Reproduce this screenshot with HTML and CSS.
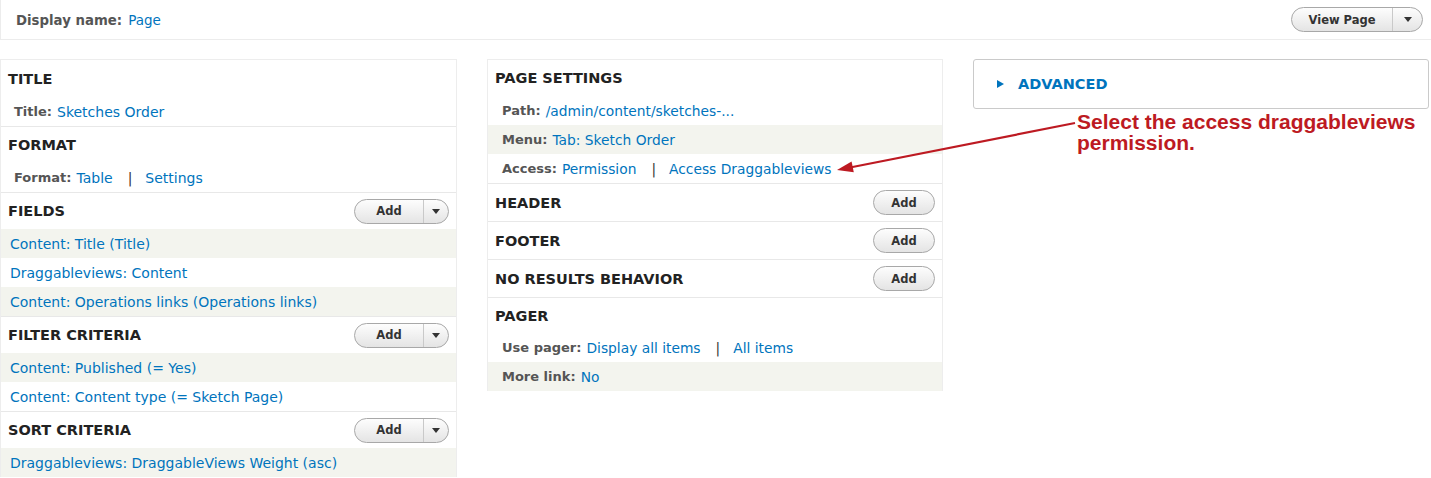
FILE: index.html
```html
<!DOCTYPE html>
<html lang="en">
<head>
    <meta charset="UTF-8">
    <meta name="viewport" content="width=device-width, initial-scale=1.0">
    <title>Views - Page display</title>
    <link rel="stylesheet" href="styles.css">
</head>
<body>

<div class="views-page">
    <div class="display-top">
        <div class="display-name"><span class="label">Display name:</span> <a href="#">Page</a></div>
        <div class="dropbutton wide">
            <span class="action">View Page</span>
            <span class="toggle"><span class="caret"></span></span>
        </div>
    </div>

    <div class="columns">
        <!-- first column -->
        <div class="column">
            <div class="section">
                <div class="section-head"><h3>Title</h3></div>
                <div class="row detail"><span class="label">Title:</span> <a href="#">Sketches Order</a></div>
            </div>
            <div class="section">
                <div class="section-head"><h3>Format</h3></div>
                <div class="row detail"><span class="label">Format:</span> <a href="#">Table</a><span class="sep">|</span><a href="#">Settings</a></div>
            </div>
            <div class="section">
                <div class="section-head">
                    <h3>Fields</h3>
                    <div class="dropbutton">
                        <span class="action">Add</span>
                        <span class="toggle"><span class="caret"></span></span>
                    </div>
                </div>
                <div class="row odd"><a href="#">Content: Title (Title)</a></div>
                <div class="row"><a href="#">Draggableviews: Content</a></div>
                <div class="row odd"><a href="#">Content: Operations links (Operations links)</a></div>
            </div>
            <div class="section">
                <div class="section-head">
                    <h3>Filter criteria</h3>
                    <div class="dropbutton">
                        <span class="action">Add</span>
                        <span class="toggle"><span class="caret"></span></span>
                    </div>
                </div>
                <div class="row odd"><a href="#">Content: Published (= Yes)</a></div>
                <div class="row"><a href="#">Content: Content type (= Sketch Page)</a></div>
            </div>
            <div class="section">
                <div class="section-head">
                    <h3>Sort criteria</h3>
                    <div class="dropbutton">
                        <span class="action">Add</span>
                        <span class="toggle"><span class="caret"></span></span>
                    </div>
                </div>
                <div class="row odd"><a href="#">Draggableviews: DraggableViews Weight (asc)</a></div>
            </div>
        </div>

        <!-- second column -->
        <div class="column">
            <div class="section">
                <div class="section-head first"><h3>Page settings</h3></div>
                <div class="row detail"><span class="label">Path:</span> <a href="#">/admin/content/sketches-...</a></div>
                <div class="row detail odd"><span class="label">Menu:</span> <a href="#">Tab: Sketch Order</a></div>
                <div class="row detail"><span class="label">Access:</span> <a href="#">Permission</a><span class="sep">|</span><a href="#">Access Draggableviews</a></div>
            </div>
            <div class="section empty">
                <div class="section-head"><h3>Header</h3><button class="add-btn">Add</button></div>
            </div>
            <div class="section empty">
                <div class="section-head"><h3>Footer</h3><button class="add-btn">Add</button></div>
            </div>
            <div class="section empty">
                <div class="section-head"><h3>No results behavior</h3><button class="add-btn">Add</button></div>
            </div>
            <div class="section tight">
                <div class="section-head"><h3>Pager</h3></div>
                <div class="row detail"><span class="label">Use pager:</span> <a href="#">Display all items</a><span class="sep">|</span><a href="#">All items</a></div>
                <div class="row detail odd"><span class="label">More link:</span> <a href="#">No</a></div>
            </div>
        </div>

        <!-- third column -->
        <div class="column third">
            <div class="advanced">
                <span class="arrow-right"></span>
                <a href="#">Advanced</a>
            </div>
        </div>
    </div>

    <!-- annotation -->
    <div class="note">Select the access draggableviews<br>permission.</div>
    <svg class="note-arrow" width="1431" height="478" viewBox="0 0 1431 478">
        <line x1="1075" y1="123" x2="850" y2="167.5" stroke="#bd1a22" stroke-width="2.2"/>
        <polygon points="837,170 851.6,161.5 853.8,172.3" fill="#bd1a22"/>
    </svg>
</div>

</body>
</html>
```

FILE: styles.css
```css
body {
    margin: 0;
    font-family: "DejaVu Sans", "Lucida Grande", Verdana, sans-serif;
    font-size: 13px;
    color: #333;
    background: #fff;
}
a {
    color: #0074bd;
    text-decoration: none;
}
.views-page {
    position: relative;
    width: 1431px;
    height: 478px;
    overflow: hidden;
}
.label {
    font-weight: bold;
    color: #555;
}

/* top bar */
.display-top {
    height: 39px;
    border: 1px solid #ececec;
    border-top: none;
    display: flex;
    align-items: center;
    justify-content: space-between;
    padding: 0 8px 0 15px;
    width: 1407px;
}
.display-name .label {
    font-size: 13.3px;
}
.display-name a {
    font-size: 13.5px;
    margin-left: 2px;
}

/* dropbuttons */
.dropbutton {
    display: flex;
    height: 23px;
    border: 1px solid #a8a8a8;
    border-radius: 13px;
    background: linear-gradient(#fdfdfd, #e4e4e4);
    font-size: 11.5px;
    font-weight: bold;
    color: #333;
}
.dropbutton .action {
    width: 68px;
    display: flex;
    align-items: center;
    justify-content: center;
}
.dropbutton .toggle {
    width: 24px;
    border-left: 1px solid #c9c9c9;
    display: flex;
    align-items: center;
    justify-content: center;
}
.dropbutton.wide .action {
    width: 100px;
}
.dropbutton.wide .toggle {
    width: 29px;
}
.caret {
    width: 0;
    height: 0;
    border-left: 4px solid transparent;
    border-right: 4px solid transparent;
    border-top: 5px solid #333;
}
.add-btn {
    width: 62px;
    height: 25px;
    border: 1px solid #a8a8a8;
    border-radius: 13px;
    background: linear-gradient(#fdfdfd, #e4e4e4);
    font-family: inherit;
    font-size: 11.5px;
    font-weight: bold;
    color: #333;
    padding: 0;
}

/* columns */
.columns {
    display: grid;
    grid-template-columns: 457px 456px 456px;
    column-gap: 30px;
    margin-top: 19px;
}
.column {
    border: 1px solid #ededed;
    border-bottom: none;
    align-self: start;
}
.column.third {
    border: none;
}
.section + .section {
    border-top: 1px solid #e8e8e8;
}
.section-head {
    height: 37px;
    display: flex;
    align-items: center;
    justify-content: space-between;
    padding: 0 7px 0 7px;
}
.section-head.first {
    height: 36px;
}
.section-head h3 {
    margin: 0;
    font-size: 14.5px;
    font-weight: bold;
    text-transform: uppercase;
    color: #222;
}
.section + .section .section-head {
    height: 36px;
}
.section.empty .section-head {
    height: 37px;
}
.section.tight .section-head {
    height: 35px;
}
.row {
    height: 29px;
    display: flex;
    align-items: center;
    padding-left: 9px;
    font-size: 14px;
}
.row .label {
    font-size: 13px;
    margin-right: 5px;
}
.row.detail {
    padding-left: 13px;
}
.column + .column .row.detail {
    padding-left: 14px;
    font-size: 13.8px;
}
.row.odd {
    background: #f3f4ee;
}
.sep {
    margin: 0 13px 0 15px;
    color: #333;
}

/* advanced box */
.advanced {
    height: 48px;
    border: 1px solid #cacaca;
    border-radius: 3px;
    display: flex;
    align-items: center;
    padding-left: 23px;
}
.advanced a {
    font-size: 14.5px;
    font-weight: bold;
    text-transform: uppercase;
}
.arrow-right {
    width: 0;
    height: 0;
    border-top: 4px solid transparent;
    border-bottom: 4px solid transparent;
    border-left: 7px solid #0074bd;
    margin-right: 14px;
}

/* annotation overlay */
.note {
    position: absolute;
    left: 1077px;
    top: 111px;
    font-family: "Liberation Sans", Arial, sans-serif;
    font-weight: bold;
    font-size: 21px;
    line-height: 21px;
    color: #bd1a22;
}
.note-arrow {
    position: absolute;
    left: 0;
    top: 0;
    pointer-events: none;
}
```
